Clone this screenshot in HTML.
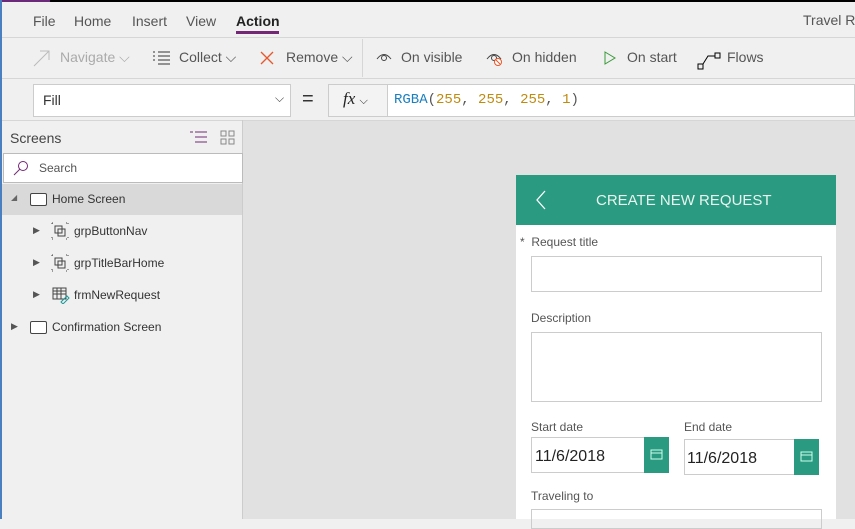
<!DOCTYPE html>
<html><head><meta charset="utf-8"><style>
*{box-sizing:border-box;margin:0;padding:0}
body{width:855px;height:519px;overflow:hidden;background:#f0f0f0;font-family:"Segoe UI","Liberation Sans",sans-serif;color:#333;position:relative;font-size:13px}
.a{position:absolute;white-space:nowrap}
.g{color:#555}
</style></head><body>
<div class="a" style="left:0;top:0;width:855px;height:2px;background:#000"></div>
<div class="a" style="left:0;top:0;width:50px;height:2px;background:#6b2a7a"></div>
<div class="a" style="left:0;top:0;width:2px;height:519px;background:#4a7fc0"></div>
<!-- tabs -->
<div class="a g" style="left:33px;top:13px;font-size:14px">File</div>
<div class="a g" style="left:74px;top:13px;font-size:14px">Home</div>
<div class="a g" style="left:132px;top:13px;font-size:14px">Insert</div>
<div class="a g" style="left:186px;top:13px;font-size:14px">View</div>
<div class="a" style="left:236px;top:13px;font-size:14px;font-weight:bold;color:#222">Action</div>
<div class="a" style="left:236px;top:31px;width:43px;height:3px;background:#742774"></div>
<div class="a g" style="left:803px;top:12px;font-size:14px">Travel Re</div>
<div class="a" style="left:2px;top:37px;width:853px;height:1px;background:#d6d6d6"></div>
<!-- toolbar -->
<svg class="a" style="left:33px;top:49px" width="18" height="18"><path d="M1 17L16 2M7 2h9v9" stroke="#bbb" fill="none"/></svg>
<div class="a" style="left:60px;top:49px;font-size:14px;color:#aaa">Navigate ⌵</div>
<svg class="a" style="left:153px;top:51px" width="18" height="14"><path d="M0 1h2M5 1h12M0 5h2M5 5h12M0 9h2M5 9h12M5 13h12" stroke="#333"/></svg>
<div class="a g" style="left:179px;top:49px;font-size:14px">Collect ⌵</div>
<svg class="a" style="left:260px;top:51px" width="14" height="14"><path d="M1 1L13 13M13 1L1 13" stroke="#e8562a" stroke-width="1.3"/></svg>
<div class="a g" style="left:286px;top:49px;font-size:14px">Remove ⌵</div>
<div class="a" style="left:362px;top:39px;width:1px;height:38px;background:#d6d6d6"></div>
<svg class="a" style="left:376px;top:51px" width="16" height="12"><path d="M1 8Q8 -1 15 8" stroke="#444" fill="none"/><circle cx="8" cy="7" r="2.5" stroke="#444" fill="none"/></svg>
<div class="a g" style="left:401px;top:49px;font-size:14px">On visible</div>
<svg class="a" style="left:486px;top:51px" width="17" height="15"><path d="M1 8Q8 -1 15 8" stroke="#444" fill="none"/><circle cx="8" cy="7" r="2.5" stroke="#444" fill="none"/><circle cx="12" cy="11" r="3.5" stroke="#e8562a" fill="#fff"/><path d="M10 9l4 4" stroke="#e8562a"/></svg>
<div class="a g" style="left:512px;top:49px;font-size:14px">On hidden</div>
<svg class="a" style="left:604px;top:51px" width="12" height="14"><path d="M1 1L11 7L1 13Z" stroke="#3a9a3a" fill="none"/></svg>
<div class="a g" style="left:627px;top:49px;font-size:14px">On start</div>
<svg class="a" style="left:697px;top:51px" width="26" height="20"><rect x="1" y="13" width="5" height="5" stroke="#000" fill="none"/><rect x="18" y="2" width="5" height="5" stroke="#000" fill="none"/><path d="M6 13L11 5h7" stroke="#000" fill="none"/></svg>
<div class="a g" style="left:727px;top:49px;font-size:14px">Flows</div>
<div class="a" style="left:2px;top:78px;width:853px;height:1px;background:#d6d6d6"></div>
<!-- formula -->
<div class="a" style="left:33px;top:84px;width:258px;height:33px;background:#fff;border:1px solid #ccc"></div>
<div class="a" style="left:43px;top:92px;font-size:14px;color:#333">Fill</div>
<div class="a" style="left:275px;top:91px;font-size:12px;color:#444">⌵</div>
<div class="a" style="left:302px;top:88px;font-size:20px;color:#333">=</div>
<div class="a" style="left:328px;top:84px;width:527px;height:33px;background:#fff;border:1px solid #ccc"></div>
<div class="a" style="left:328px;top:84px;width:60px;height:33px;background:#f3f3f3;border:1px solid #ccc"></div>
<div class="a" style="left:343px;top:89px;font-size:17px;font-style:italic;font-family:'Liberation Serif',serif;color:#222">fx <span style="font-style:normal;font-size:11px">⌵</span></div>
<div class="a" style="left:394px;top:92px;font-family:'Liberation Mono',monospace;font-size:14px;color:#555"><span style="color:#1a7fc0">RGBA</span>(<span style="color:#c08a10">255</span>, <span style="color:#c08a10">255</span>, <span style="color:#c08a10">255</span>, <span style="color:#c08a10">1</span>)</div>
<!-- left panel -->
<div class="a" style="left:2px;top:120px;width:853px;height:1px;background:#d6d6d6"></div>
<div class="a" style="left:242px;top:120px;width:1px;height:399px;background:#ccc"></div>
<div class="a" style="left:10px;top:130px;font-size:14px;color:#444">Screens</div>
<svg class="a" style="left:190px;top:131px" width="18" height="14"><path d="M5 1h12M5 6h12M5 11h12" stroke="#742774"/><path d="M0 1h3" stroke="#742774"/></svg>
<svg class="a" style="left:220px;top:130px" width="15" height="15" fill="none" stroke="#888"><rect x="1" y="1" width="5" height="5"/><rect x="9" y="1" width="5" height="5"/><rect x="1" y="9" width="5" height="5"/><rect x="9" y="9" width="5" height="5"/></svg>
<div class="a" style="left:3px;top:153px;width:240px;height:30px;background:#fff;border:1px solid #bbb"></div>
<svg class="a" style="left:13px;top:160px" width="16" height="16" fill="none" stroke="#742774"><circle cx="10" cy="6" r="4.5"/><path d="M7 9L1 15"/></svg>
<div class="a" style="left:39px;top:161px;font-size:12px;color:#555">Search</div>
<div class="a" style="left:2px;top:184px;width:240px;height:31px;background:#d9d9d9"></div>
<div class="a" style="left:11px;top:193px;font-size:8px;color:#666">◢</div>
<div class="a" style="left:30px;top:193px;width:17px;height:13px;border:1px solid #444;border-radius:2px;background:#fff"></div>
<div class="a" style="left:52px;top:192px;font-size:12px;color:#333">Home Screen</div>
<div class="a" style="left:33px;top:225px;font-size:9px;color:#555">▶</div>
<svg class="a" style="left:50px;top:221px" width="20" height="20" fill="none" stroke="#444"><path d="M2 2h2M16 2h2M2 18h2M16 18h2M2 2v2M18 2v2M2 16v2M18 16v2" stroke-dasharray="1 1"/><rect x="5" y="5" width="7" height="7"/><rect x="8" y="8" width="7" height="7"/></svg>
<div class="a" style="left:74px;top:224px;font-size:12px">grpButtonNav</div>
<div class="a" style="left:33px;top:257px;font-size:9px;color:#555">▶</div>
<svg class="a" style="left:50px;top:253px" width="20" height="20" fill="none" stroke="#444"><path d="M2 2h2M16 2h2M2 18h2M16 18h2M2 2v2M18 2v2M2 16v2M18 16v2" stroke-dasharray="1 1"/><rect x="5" y="5" width="7" height="7"/><rect x="8" y="8" width="7" height="7"/></svg>
<div class="a" style="left:74px;top:256px;font-size:12px">grpTitleBarHome</div>
<div class="a" style="left:33px;top:289px;font-size:9px;color:#555">▶</div>
<svg class="a" style="left:52px;top:287px" width="18" height="17" fill="none" stroke="#444"><rect x="1" y="1" width="13" height="11"/><path d="M1 4h13M1 7h13M5 1v11M9 1v11"/><path d="M9 15l6-6 2 2-6 6z" stroke="#1a9a9a"/></svg>
<div class="a" style="left:74px;top:288px;font-size:12px">frmNewRequest</div>
<div class="a" style="left:11px;top:321px;font-size:9px;color:#555">▶</div>
<div class="a" style="left:30px;top:321px;width:17px;height:13px;border:1px solid #444;border-radius:2px;background:#fff"></div>
<div class="a" style="left:52px;top:320px;font-size:12px">Confirmation Screen</div>
<!-- canvas -->
<div class="a" style="left:243px;top:121px;width:612px;height:398px;background:#e1e1e1"></div>
<div class="a" style="left:516px;top:175px;width:320px;height:344px;background:#fff"></div>
<div class="a" style="left:516px;top:175px;width:320px;height:50px;background:#2a9a80"></div>
<svg class="a" style="left:535px;top:190px" width="12" height="20"><path d="M10 1L2 10L10 19" stroke="#fff" fill="none" stroke-width="1.3"/></svg>
<div class="a" style="left:596px;top:192px;font-size:15px;color:#e8f5f0">CREATE NEW REQUEST</div>
<div class="a" style="left:520px;top:235px;font-size:12px;color:#555">*&nbsp; Request title</div>
<div class="a" style="left:531px;top:256px;width:291px;height:36px;border:1px solid #ccc"></div>
<div class="a" style="left:531px;top:311px;font-size:12px;color:#555">Description</div>
<div class="a" style="left:531px;top:332px;width:291px;height:70px;border:1px solid #ccc"></div>
<div class="a" style="left:531px;top:420px;font-size:12px;color:#555">Start date</div>
<div class="a" style="left:684px;top:420px;font-size:12px;color:#555">End date</div>
<div class="a" style="left:531px;top:437px;width:138px;height:36px;border:1px solid #ccc"></div>
<div class="a" style="left:644px;top:437px;width:25px;height:36px;background:#2a9a80"></div>
<div class="a" style="left:535px;top:448px;font-size:16px;color:#222">11/6/2018</div>
<div class="a" style="left:684px;top:439px;width:135px;height:36px;border:1px solid #ccc"></div>
<div class="a" style="left:794px;top:439px;width:25px;height:36px;background:#2a9a80"></div>
<div class="a" style="left:687px;top:450px;font-size:16px;color:#222">11/6/2018</div>
<svg class="a" style="left:650px;top:449px" width="13" height="11" fill="none" stroke="#cfe"><rect x="1" y="1" width="11" height="9"/><path d="M1 4h11"/></svg>
<svg class="a" style="left:800px;top:451px" width="13" height="11" fill="none" stroke="#cfe"><rect x="1" y="1" width="11" height="9"/><path d="M1 4h11"/></svg>
<div class="a" style="left:531px;top:489px;font-size:12px;color:#555">Traveling to</div>
<div class="a" style="left:531px;top:509px;width:291px;height:20px;border:1px solid #ccc"></div>
</body></html>
